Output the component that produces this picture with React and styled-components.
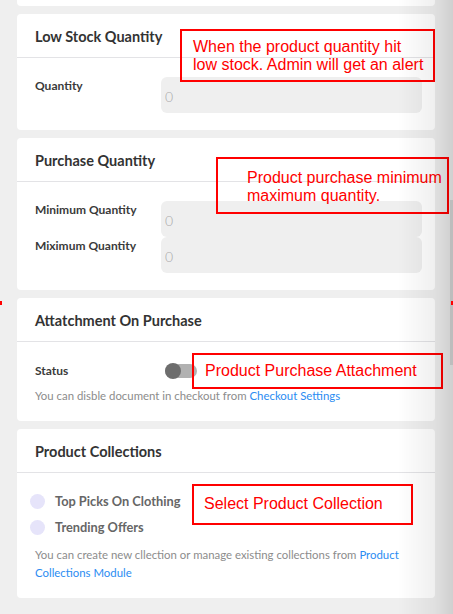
import styled, { createGlobalStyle } from 'styled-components';

const GlobalStyle = createGlobalStyle`
    html, body {
        margin: 0;
        padding: 0;
        background: #efefef;
        font-family: Lato, "Open Sans", sans-serif;
        overflow: hidden;
    }
`;

export default function App() {
    return (
        <>
            <GlobalStyle />
            <Page>
                <Card $stub />

                <Card>
                    <Header>
                        <Title>Low Stock Quantity</Title>
                    </Header>
                    <Body $pb={17}>
                        <Row>
                            <Label>Quantity</Label>
                            <Input placeholder="0" readOnly />
                        </Row>
                    </Body>
                    <Note $top={15} $left={163} $width={255} $height={53} $pl={11} $pt={7}>
                        When the product quantity hit<br />low stock. Admin will get an alert
                    </Note>
                </Card>

                <Card>
                    <Header>
                        <Title>Purchase Quantity</Title>
                    </Header>
                    <Body $pb={17}>
                        <Stack>
                            <Row>
                                <Label>Minimum Quantity</Label>
                                <Input placeholder="0" readOnly />
                            </Row>
                            <Row>
                                <Label>Miximum Quantity</Label>
                                <Input placeholder="0" readOnly />
                            </Row>
                        </Stack>
                    </Body>
                    <Note $top={19} $left={199} $width={233} $height={57} $pl={29} $pt={10}>
                        Product purchase minimum<br />maximum quantity.
                    </Note>
                </Card>

                <Card>
                    <Header>
                        <Title>Attatchment On Purchase</Title>
                    </Header>
                    <Body $gap={6} $pb={16}>
                        <StatusRow>
                            <Label>Status</Label>
                            <Toggle>
                                <Knob />
                            </Toggle>
                        </StatusRow>
                        <Help>
                            You can disble document in checkout from <Link>Checkout Settings</Link>
                        </Help>
                    </Body>
                    <Note $top={55} $left={175} $width={251} $height={36} $pl={11} $pt={7}>
                        Product Purchase Attachment
                    </Note>
                </Card>

                <Card>
                    <Header>
                        <Title>Product Collections</Title>
                    </Header>
                    <Body $gap={10} $pb={16}>
                        <Options>
                            <Option>
                                <Radio />
                                <OptionText>Top Picks On Clothing</OptionText>
                            </Option>
                            <Option>
                                <Radio />
                                <OptionText>Trending Offers</OptionText>
                            </Option>
                        </Options>
                        <Help>
                            You can create new cllection or manage existing collections from <Link>Product</Link>
                            <br />
                            <Link>Collections Module</Link>
                        </Help>
                    </Body>
                    <Note $top={55} $left={175} $width={221} $height={41} $pl={10} $pt={9}>
                        Select Product Collection
                    </Note>
                </Card>
            </Page>
            <EdgeShade />
            <ScrollThumb />
            <Dot $side="left" />
            <Dot $side="right" />
        </>
    );
}

const Page = styled.div`
    display: flex;
    flex-direction: column;
    gap: 8px;
    padding: 0 18px 20px 17px;
`;

const Card = styled.div`
    position: relative;
    background: #fff;
    border-radius: ${p => (p.$stub ? '0 0 4px 4px' : '4px')};
    height: ${p => (p.$stub ? '6px' : 'auto')};
`;

const Header = styled.div`
    height: 41px;
    display: flex;
    align-items: center;
    padding: 2px 18px 0;
    border-bottom: 1px solid #e3e3e6;
`;

const Title = styled.h3`
    margin: 0;
    font-size: 14.5px;
    font-weight: 700;
    color: #333;
`;

const Body = styled.div`
    display: flex;
    flex-direction: column;
    gap: ${p => p.$gap || 0}px;
    padding: 19px 13px ${p => p.$pb}px 18px;
`;

const Stack = styled.div`
    display: flex;
    flex-direction: column;
`;

const Row = styled.div`
    display: flex;
    align-items: flex-start;
`;

const StatusRow = styled.div`
    display: flex;
    align-items: center;
    height: 20px;
`;

const Label = styled.div`
    width: 126px;
    flex-shrink: 0;
    font-size: 12px;
    font-weight: 700;
    line-height: 18px;
    color: #3a3a3a;
`;

const Input = styled.input`
    flex: 1;
    height: 36px;
    box-sizing: border-box;
    border: none;
    border-radius: 6px;
    background: #efefef;
    padding: 2px 4px 0;
    font-family: Lato, sans-serif;
    font-size: 14px;
    color: #999;
    outline: none;
    &::placeholder {
        color: #aaa;
        font-weight: 300;
    }
`;

const Toggle = styled.div`
    margin-left: 4px;
    width: 32px;
    height: 14px;
    border-radius: 7px;
    background: #b1b1b1;
    display: flex;
    align-items: center;
`;

const Knob = styled.div`
    width: 16px;
    height: 16px;
    border-radius: 50%;
    background: #6d6d6d;
`;

const Help = styled.p`
    margin: 0;
    font-size: 11.4px;
    line-height: 18px;
    color: #8c8c8c;
    padding-right: 14px;
`;

const Link = styled.span`
    color: #2b8cf2;
`;

const Options = styled.div`
    display: flex;
    flex-direction: column;
    gap: 8px;
    margin-left: -5px;
`;

const Option = styled.div`
    display: flex;
    align-items: center;
    gap: 10px;
    height: 18px;
`;

const Radio = styled.span`
    width: 15px;
    height: 15px;
    border-radius: 50%;
    background: #e6e4fa;
`;

const OptionText = styled.span`
    font-size: 12.8px;
    font-weight: 700;
    color: #666;
`;

const Note = styled.div`
    position: absolute;
    top: ${p => p.$top}px;
    left: ${p => p.$left}px;
    width: ${p => p.$width}px;
    height: ${p => p.$height}px;
    box-sizing: border-box;
    border: 2px solid #ff0000;
    padding: ${p => p.$pt}px 0 0 ${p => p.$pl}px;
    font-family: "Liberation Sans", Arial, sans-serif;
    font-size: 16px;
    line-height: 18px;
    color: #ff0000;
    white-space: nowrap;
`;

const EdgeShade = styled.div`
    position: fixed;
    top: 0;
    right: 0;
    bottom: 0;
    width: 55px;
    pointer-events: none;
    background: linear-gradient(to right, rgba(0, 0, 0, 0) 0%, rgba(0, 0, 0, 0.06) 65%, rgba(0, 0, 0, 0.13) 100%);
`;

const ScrollThumb = styled.div`
    position: fixed;
    right: 0;
    top: 200px;
    width: 3px;
    height: 165px;
    background: #bdbdbd;
`;

const Dot = styled.div`
    position: fixed;
    top: 301px;
    ${p => (p.$side === 'left' ? 'left: 0;' : 'right: 0;')}
    width: 2px;
    height: 4px;
    background: #ff0000;
`;
